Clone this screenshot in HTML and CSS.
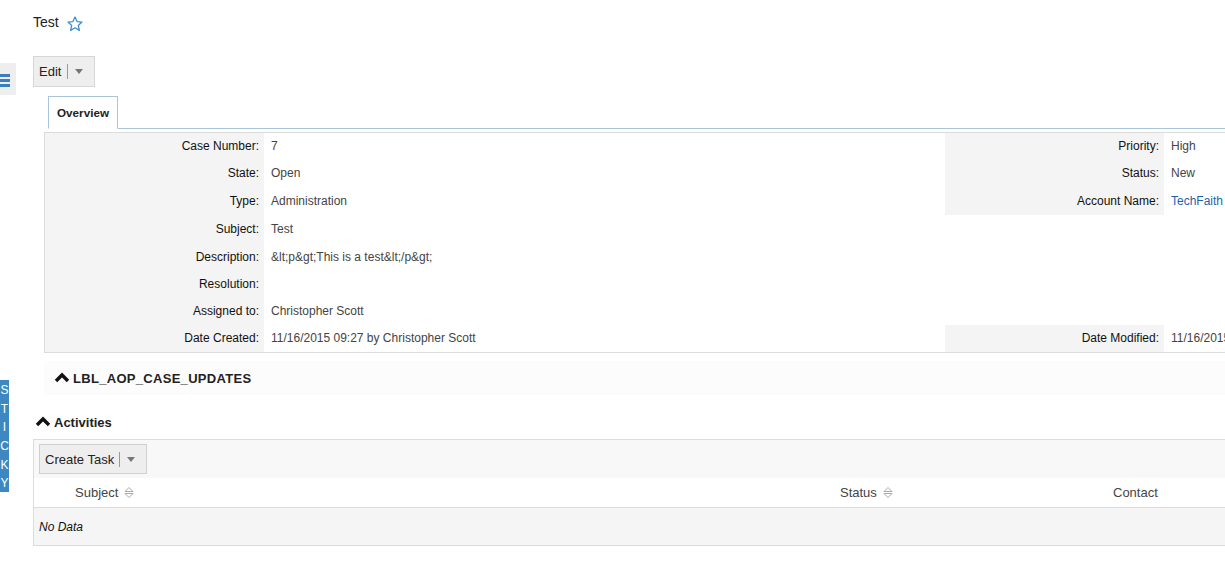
FILE: index.html
```html
<!DOCTYPE html>
<html>
<head>
<meta charset="utf-8">
<title>Test</title>
<link rel="stylesheet" href="styles.css">
</head>
<body>
<div class="side-tab">
  <svg class="list-icon" width="10" height="14" viewBox="0 0 10 14"><rect x="0" y="0" width="10" height="3" fill="#3a7fc0"/><rect x="0" y="5" width="10" height="3" fill="#3a7fc0"/><rect x="0" y="10" width="10" height="3" fill="#3a7fc0"/></svg>
</div>
<div class="sticky"><span>S</span><span>T</span><span>I</span><span>C</span><span>K</span><span>Y</span></div>

<div class="page">
  <div class="title-row">
    <span class="title">Test</span>
    <svg class="star" width="16" height="16" viewBox="0 0 16 16"><polygon points="8,1 10.1,5.6 15,6.1 11.3,9.4 12.4,14.4 8,11.8 3.6,14.4 4.7,9.4 1,6.1 5.9,5.6" fill="none" stroke="#3b8fd0" stroke-width="1.3" stroke-linejoin="round"/></svg>
  </div>

  <div class="btn edit-btn"><span>Edit</span><span class="sep"></span><span class="caret"></span></div>

  <div class="tabs"><div class="tab">Overview</div></div>

  <div class="detail">
    <div class="lbl">Case Number:</div><div class="val">7</div><div class="lbl">Priority:</div><div class="val">High</div>
    <div class="lbl">State:</div><div class="val">Open</div><div class="lbl">Status:</div><div class="val">New</div>
    <div class="lbl">Type:</div><div class="val">Administration</div><div class="lbl">Account Name:</div><div class="val link">TechFaith</div>
    <div class="lbl low">Subject:</div><div class="val low">Test</div><div class="empty"></div><div class="empty"></div>
    <div class="lbl low">Description:</div><div class="val low">&amp;lt;p&amp;gt;This is a test&amp;lt;/p&amp;gt;</div><div class="empty"></div><div class="empty"></div>
    <div class="lbl low">Resolution:</div><div class="val low"></div><div class="empty"></div><div class="empty"></div>
    <div class="lbl low">Assigned to:</div><div class="val low">Christopher Scott</div><div class="empty"></div><div class="empty"></div>
    <div class="lbl">Date Created:</div><div class="val">11/16/2015 09:27 by Christopher Scott</div><div class="lbl">Date Modified:</div><div class="val">11/16/2015 09:27 by Christopher Scott</div>
  </div>

  <div class="sub-head">
    <svg class="chev" width="16" height="11" viewBox="0 0 16 11"><polyline points="2,9 8,3 14,9" fill="none" stroke="#111" stroke-width="3.4"/></svg>
    <span>LBL_AOP_CASE_UPDATES</span>
  </div>

  <div class="act-head">
    <svg class="chev" width="16" height="11" viewBox="0 0 16 11"><polyline points="2,9 8,3 14,9" fill="none" stroke="#111" stroke-width="3.4"/></svg>
    <span>Activities</span>
  </div>

  <div class="act-panel">
    <div class="toolbar">
      <div class="btn task-btn"><span>Create Task</span><span class="sep"></span><span class="caret"></span></div>
    </div>
    <div class="thead">
      <div></div>
      <div class="th">Subject <svg class="sort" width="10" height="13" viewBox="0 0 10 13"><polygon points="1,5.5 5,1.5 9,5.5" fill="none" stroke="#aaa"/><polygon points="1,7.5 5,11.5 9,7.5" fill="none" stroke="#aaa"/></svg></div>
      <div class="th">Status <svg class="sort" width="10" height="13" viewBox="0 0 10 13"><polygon points="1,5.5 5,1.5 9,5.5" fill="none" stroke="#aaa"/><polygon points="1,7.5 5,11.5 9,7.5" fill="none" stroke="#aaa"/></svg></div>
      <div class="th">Contact</div>
    </div>
    <div class="nodata">No Data</div>
  </div>
</div>
</body>
</html>
```

FILE: styles.css
```css
html, body {
  margin: 0;
  padding: 0;
  background: #fff;
  overflow: hidden;
}
body {
  font-family: "Liberation Sans", Arial, sans-serif;
  font-size: 12px;
  color: #333;
  width: 1225px;
  height: 562px;
  position: relative;
}
.side-tab {
  position: absolute;
  left: 0;
  top: 63px;
  width: 16px;
  height: 32px;
  background: #eeeeee;
}
.list-icon {
  position: absolute;
  left: 0;
  top: 11px;
}
.sticky {
  position: absolute;
  left: 0;
  top: 380px;
  width: 9px;
  height: 112px;
  background: #3d88c2;
  color: #fff;
  font-size: 12px;
  display: flex;
  flex-direction: column;
  align-items: center;
  padding-top: 1px;
  box-sizing: border-box;
  overflow: hidden;
}
.sticky span {
  height: 18.7px;
  line-height: 18.7px;
}
.page {
  padding: 13px 0 0 33px;
  width: 1400px;
}
.title-row {
  display: flex;
  align-items: center;
  height: 18px;
}
.title {
  font-size: 14px;
  color: #222;
}
.star {
  margin-left: 8px;
  margin-top: 3px;
}
.btn {
  display: inline-flex;
  align-items: center;
  background: #eeeeee;
  border: 1px solid #d6d6d6;
  box-sizing: border-box;
  font-size: 13px;
  color: #222;
}
.edit-btn {
  margin-top: 25px;
  height: 31px;
  width: 62px;
  padding-left: 5px;
}
.sep {
  width: 1px;
  height: 15px;
  background: #999;
  margin-left: 6px;
}
.caret {
  width: 0;
  height: 0;
  border-left: 4.5px solid transparent;
  border-right: 4.5px solid transparent;
  border-top: 5px solid #777;
  margin-left: 7px;
}
.tabs {
  display: flex;
  margin-left: 15px;
  margin-top: 9px;
  border-bottom: 1px solid #a9c5db;
  height: 32px;
}
.tab {
  width: 70px;
  height: 33px;
  box-sizing: border-box;
  border: 1px solid #a9c5db;
  border-bottom: 1px solid #fff;
  background: #fff;
  font-weight: bold;
  font-size: 11.7px;
  color: #222;
  display: flex;
  align-items: center;
  justify-content: center;
}
.detail {
  margin-left: 11px;
  margin-top: 3px;
  border: 1px solid #dcdcdc;
  border-right: none;
  display: grid;
  grid-template-columns: 219px 681px 219px 1fr;
  grid-auto-rows: 27.375px;
}
.lbl {
  background: #f4f4f4;
  text-align: right;
  padding: 6px 5px 0 0;
  color: #111;
}
.val {
  padding: 6px 0 0 7px;
  color: #444;
  white-space: nowrap;
}
.lbl.low, .val.low {
  padding-top: 7px;
}
.val.link {
  color: #1f5fa8;
}
.sub-head {
  margin-left: 11px;
  margin-top: 8px;
  height: 34px;
  background: #fcfcfc;
  display: flex;
  align-items: center;
  padding-left: 10px;
  font-weight: bold;
  font-size: 13px;
  letter-spacing: 0.3px;
  color: #222;
}
.chev {
  margin-right: 3px;
  margin-top: -2px;
}
.act-head {
  display: flex;
  align-items: center;
  margin-top: 15px;
  height: 24px;
  padding-left: 2px;
  font-weight: bold;
  font-size: 13px;
  color: #222;
}
.act-panel {
  margin-top: 5px;
  border: 1px solid #dcdcdc;
  border-right: none;
}
.toolbar {
  background: #f8f8f8;
  height: 38px;
  padding: 4px 0 0 5px;
  box-sizing: border-box;
}
.task-btn {
  height: 30px;
  width: 108px;
  padding-left: 5px;
  border-color: #d0d0d0;
}
.task-btn .sep {
  margin-left: 5px;
}
.thead {
  display: grid;
  grid-template-columns: 41px 765px 273px 1fr;
  height: 29px;
  align-items: center;
  background: #fff;
  border-bottom: 1px solid #dcdcdc;
  font-size: 13px;
  color: #444;
}
.th {
  display: flex;
  align-items: center;
}
.sort {
  margin-left: 6px;
}
.nodata {
  height: 37px;
  background: #f5f5f5;
  display: flex;
  align-items: center;
  padding-left: 5px;
  font-style: italic;
  color: #111;
}
```
